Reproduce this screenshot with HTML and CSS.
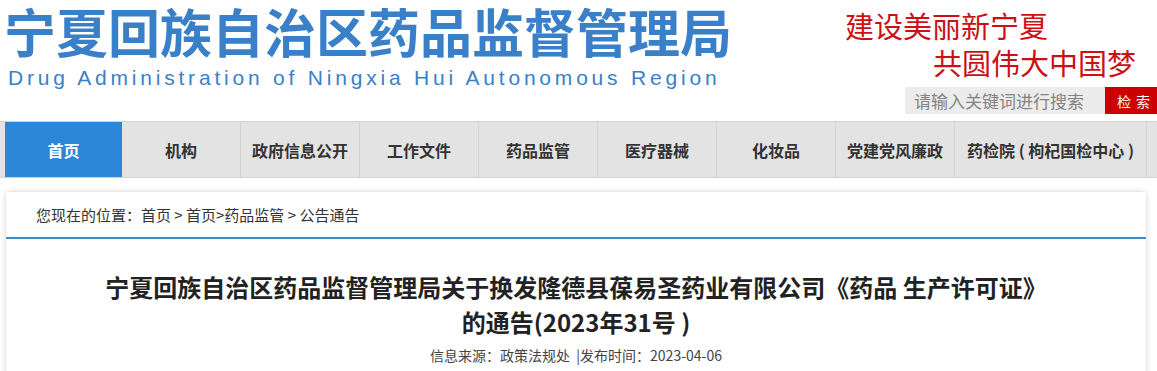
FILE: index.html
```html
<!DOCTYPE html>
<html lang="zh-CN">
<head>
<meta charset="utf-8">
<title>宁夏回族自治区药品监督管理局</title>
<link rel="stylesheet" href="styles.css">
</head>
<body>

<div class="top">
	<div class="logo">
		<div class="logo-cn">宁夏回族自治区药品监督管理局</div>
		<div class="logo-en">Drug Administration of Ningxia Hui Autonomous Region</div>
	</div>
	<div class="top-right">
		<div class="slogan">
			<div class="slogan-1">建设美丽新宁夏</div>
			<div class="slogan-2">共圆伟大中国梦</div>
		</div>
		<div class="search">
			<input type="text" class="search-input" placeholder="请输入关键词进行搜索">
			<button type="button" class="search-btn">检 索</button>
		</div>
	</div>
</div>

<div class="nav">
	<a class="nav-item active" href="#">首页</a>
	<a class="nav-item" href="#">机构</a>
	<a class="nav-item" href="#">政府信息公开</a>
	<a class="nav-item" href="#">工作文件</a>
	<a class="nav-item" href="#">药品监管</a>
	<a class="nav-item" href="#">医疗器械</a>
	<a class="nav-item" href="#">化妆品</a>
	<a class="nav-item" href="#">党建党风廉政</a>
	<a class="nav-item wide" href="#">药检院 ( 枸杞国检中心 )</a>
</div>

<div class="article">
	<div class="crumbs">您现在的位置：首页 &gt; 首页&gt;药品监管 &gt; 公告通告</div>
	<h1 class="title">宁夏回族自治区药品监督管理局关于换发隆德县葆易圣药业有限公司《药品 生产许可证》的通告(2023年31号 )</h1>
	<div class="meta">信息来源：政策法规处 &nbsp;|发布时间：2023-04-06</div>
</div>

</body>
</html>
```

FILE: styles.css
```css
* {
	font-family: "Microsoft YaHei", "Noto Sans CJK SC", sans-serif;
	box-sizing: border-box;
}

body {
	margin: 0;
	padding: 0;
	background: #ffffff;
	width: 1157px;
	overflow: hidden;
}

.top {
	display: flex;
	justify-content: space-between;
	height: 121px;
}

.logo {
	padding-left: 4px;
	color: #3a80c9;
}

.logo-cn {
	font-size: 52px;
	font-weight: bold;
	line-height: 62px;
	white-space: nowrap;
}

.logo-en {
	font-family: "Liberation Sans", Arial, sans-serif;
	font-size: 21px;
	line-height: 24px;
	letter-spacing: 3.8px;
	padding-left: 4px;
	margin-top: 4px;
	white-space: nowrap;
}

.top-right {
	display: flex;
	flex-direction: column;
	align-items: flex-end;
}

.slogan {
	color: #cc1014;
	font-size: 29px;
	line-height: 37px;
	padding-top: 7px;
	width: 312px;
}

.slogan-2 {
	padding-left: 88px;
}

.search {
	display: flex;
	margin-top: 6px;
}

.search-input {
	width: 200px;
	height: 27px;
	border: 0;
	background: #ececec;
	font-size: 17px;
	padding: 0 0 0 9px;
	color: #555;
	outline: none;
}

.search-input::placeholder {
	color: #838383;
}

.search-btn {
	width: 52px;
	height: 27px;
	border: 0;
	background: #cc0000;
	color: #ffffff;
	font-size: 14px;
	padding: 0 0 0 6px;
	letter-spacing: 1px;
}

.nav {
	display: flex;
	background: #e3e3e3;
	border-top: 1px solid #d2d2d2;
	border-bottom: 1px solid #d2d2d2;
	padding-left: 5px;
	height: 57px;
}

.nav-item {
	width: 119px;
	height: 55px;
	display: flex;
	align-items: center;
	justify-content: center;
	border-right: 1px solid #d2d2d2;
	color: #333;
	font-size: 16px;
	font-weight: bold;
	text-decoration: none;
	white-space: nowrap;
}

.nav-item.active {
	width: 117px;
	background: #2b86d8;
	color: #ffffff;
	border-right: 0;
}

.nav-item.wide {
	width: 192px;
}

.article {
	margin: 14px 0 0 6px;
	width: 1140px;
	box-shadow: 0 0 6px rgba(0, 0, 0, 0.18);
	padding-bottom: 20px;
}

.crumbs {
	height: 47px;
	line-height: 46px;
	padding-left: 30px;
	font-size: 15px;
	color: #333;
	border-bottom: 2px solid #3f8bd2;
}

.title {
	margin: 0;
	padding: 30px 96px 0;
	text-align: center;
	font-size: 24px;
	line-height: 35px;
	color: #222;
	font-weight: bold;
}

.meta {
	text-align: center;
	font-size: 14px;
	color: #444;
	line-height: 20px;
	margin-top: 6px;
}
```
